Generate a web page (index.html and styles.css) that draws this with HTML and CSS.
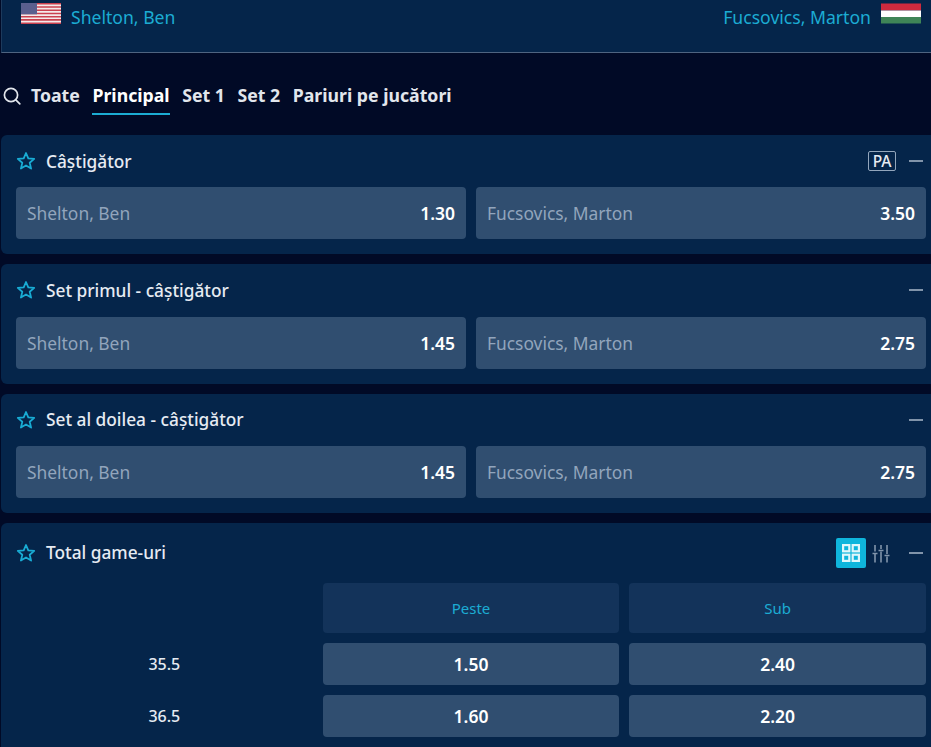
FILE: index.html
```html
<!DOCTYPE html>
<html lang="en">
<head>
  <meta charset="UTF-8" />
  <meta name="viewport" content="width=device-width, initial-scale=1.0" />
  <title>Shelton, Ben - Fucsovics, Marton</title>
  <link rel="stylesheet" href="styles.css">
</head>

<body>
  <svg class="sprite" width="0" height="0">
    <symbol id="star" viewBox="0 0 20 20">
      <path d="M10 2 L12.300 7.400 L18.200 7.900 L13.700 11.800 L15.100 17.600 L10 14.500 L4.900 17.600 L6.300 11.800 L1.800 7.900 L7.700 7.400 Z" fill="none" stroke="currentColor" stroke-width="1.800" stroke-linejoin="round" />
    </symbol>
  </svg>

  <div class="match-head">
    <div class="team">
      <svg class="flag" viewBox="0 0 40 21">
        <rect width="40" height="21" fill="#f4eaea" />
        <path d="M0 0H40V1.600H0ZM0 3.200H40V4.800H0ZM0 6.400H40V8H0ZM0 9.700H40V11.300H0ZM0 12.900H40V14.500H0ZM0 16.100H40V17.700H0ZM0 19.400H40V21H0Z" fill="#c9414f" />
        <rect width="16" height="11.300" fill="#5a5f8e" />
      </svg>
      <span>Shelton, Ben</span>
    </div>
    <div class="team">
      <span>Fucsovics, Marton</span>
      <svg class="flag" viewBox="0 0 40 20">
        <rect width="40" height="7" fill="#cd2a3e" />
        <rect y="7" width="40" height="6.500" fill="#ffffff" />
        <rect y="13.500" width="40" height="6.500" fill="#3f8557" />
      </svg>
    </div>
  </div>

  <div class="tabs">
    <svg class="search" viewBox="0 0 18 18">
      <circle cx="8" cy="8" r="6.600" fill="none" stroke="currentColor" stroke-width="1.700" />
      <path d="M12.800 12.800 L16.800 16.800" stroke="currentColor" stroke-width="1.700" stroke-linecap="round" />
    </svg>
    <a class="tab">Toate</a>
    <a class="tab active">Principal</a>
    <a class="tab">Set 1</a>
    <a class="tab">Set 2</a>
    <a class="tab">Pariuri pe jucători</a>
  </div>

  <div class="market">
    <div class="market-head">
      <svg class="star"><use href="#star" /></svg>
      <span class="title">Câștigător</span>
      <span class="pa">PA</span>
      <span class="minus"></span>
    </div>
    <div class="odds">
      <div class="odd"><span class="name">Shelton, Ben</span><span class="price">1.30</span></div>
      <div class="odd"><span class="name">Fucsovics, Marton</span><span class="price">3.50</span></div>
    </div>
  </div>

  <div class="market">
    <div class="market-head">
      <svg class="star"><use href="#star" /></svg>
      <span class="title">Set primul - câștigător</span>
      <span class="minus"></span>
    </div>
    <div class="odds">
      <div class="odd"><span class="name">Shelton, Ben</span><span class="price">1.45</span></div>
      <div class="odd"><span class="name">Fucsovics, Marton</span><span class="price">2.75</span></div>
    </div>
  </div>

  <div class="market">
    <div class="market-head">
      <svg class="star"><use href="#star" /></svg>
      <span class="title">Set al doilea - câștigător</span>
      <span class="minus"></span>
    </div>
    <div class="odds">
      <div class="odd"><span class="name">Shelton, Ben</span><span class="price">1.45</span></div>
      <div class="odd"><span class="name">Fucsovics, Marton</span><span class="price">2.75</span></div>
    </div>
  </div>

  <div class="market market-total">
    <div class="market-head">
      <svg class="star"><use href="#star" /></svg>
      <span class="title">Total game-uri</span>
      <span class="view-btn">
        <svg viewBox="0 0 18 18" width="18" height="18" fill="none" stroke="#e0f7fb" stroke-width="2.200">
          <rect x="1.100" y="1.100" width="6.200" height="6.200" />
          <rect x="10.700" y="1.100" width="6.200" height="6.200" />
          <rect x="1.100" y="10.700" width="6.200" height="6.200" />
          <rect x="10.700" y="10.700" width="6.200" height="6.200" />
        </svg>
      </span>
      <svg class="sliders" viewBox="0 0 20 20" fill="none" stroke="currentColor" stroke-width="1.600">
        <path d="M4 2V8.500M4 11V19.500M10 2V6M10 8.500V19.500M16 2V11M16 13.500V19.500" />
        <path d="M1.500 10.500H6.500M7.500 7.500H12.500M13.500 12.500H18.500" />
      </svg>
      <span class="minus"></span>
    </div>
    <div class="total-grid">
      <div></div>
      <div class="col-head">Peste</div>
      <div class="col-head">Sub</div>
      <div class="line">35.5</div>
      <div class="cell">1.50</div>
      <div class="cell">2.40</div>
      <div class="line">36.5</div>
      <div class="cell">1.60</div>
      <div class="cell">2.20</div>
    </div>
  </div>
</body>
</html>
```

FILE: styles.css
```css
:root {
  --page: #010a26;
  --card: #05254a;
  --btn: #304e70;
  --head-cell: #13335a;
  --accent: #1cacd3;
}

html {
  height: 100%;
  overflow: hidden;
}

body {
  margin: 0;
  padding-left: 1px;
  font-family: "Noto Sans", sans-serif;
  background: var(--page);
  color: #fff;
}

.sprite {
  position: absolute;
}

.match-head {
  display: flex;
  justify-content: space-between;
  box-sizing: border-box;
  height: 53px;
  padding: 3px 10px 0 19px;
  background: #05254a;
  border-left: 1px solid #1d3a5c;
  border-bottom: 1px solid #4f6480;
}

.team {
  display: flex;
  align-items: flex-start;
  gap: 10px;
  font-size: 17.6px;
  line-height: 28px;
  color: var(--accent);
}

.flag {
  width: 40px;
  height: 21px;
  display: block;
}

.tabs {
  display: flex;
  align-items: flex-start;
  gap: 12.6px;
  box-sizing: border-box;
  height: 82px;
  padding: 31px 0 0 2px;
  color: #e2e6ec;
}

.search {
  width: 18px;
  height: 18px;
  margin: 3px -2.600px 0 0;
}

.tab {
  font-size: 17.7px;
  font-weight: 700;
  line-height: 22px;
  padding-bottom: 7px;
  border-bottom: 2px solid transparent;
}

.tab.active {
  color: #fff;
  border-bottom-color: var(--accent);
}

.market {
  height: 119.3px;
  margin-bottom: 10px;
  background: var(--card);
  border-radius: 6px 0 0 6px;
  box-sizing: border-box;
  padding: 0 5px 0 15px;
}

.market-head {
  display: flex;
  align-items: center;
  height: 52.4px;
  color: #e6ebf2;
}

.star {
  width: 20px;
  height: 20px;
  color: #19acd4;
  margin-right: 10px;
}

.title {
  flex: 1;
  font-size: 17.3px;
  font-weight: 500;
}

.pa {
  border: 1px solid #93a6bc;
  border-radius: 2px;
  font-size: 15.5px;
  font-weight: 500;
  line-height: 18px;
  padding: 0 3.500px;
  margin-right: 13px;
}

.minus {
  width: 14px;
  height: 2px;
  background: #8194aa;
  margin-right: 3px;
}

.odds {
  display: grid;
  grid-template-columns: 1fr 1fr;
  gap: 10px;
}

.odd {
  display: flex;
  align-items: center;
  justify-content: space-between;
  height: 52px;
  padding: 0 11px;
  background: var(--btn);
  border-radius: 4px;
}

.name {
  font-size: 17.4px;
  color: #92a5bc;
}

.price {
  font-size: 17.5px;
  font-weight: 600;
}

.market-total {
  height: auto;
  margin-bottom: 0;
  padding-bottom: 20px;
}

.market-total .market-head {
  height: 60px;
}

.view-btn {
  display: flex;
  align-items: center;
  justify-content: center;
  width: 30px;
  height: 30px;
  background: #0fb5dc;
  border-radius: 2px;
  margin-right: 5px;
}

.sliders {
  width: 20px;
  height: 20px;
  color: #8194aa;
  margin-right: 18px;
}

.total-grid {
  display: grid;
  grid-template-columns: 1fr 1fr 1fr;
  grid-template-rows: 50px 42px 42px;
  gap: 10px;
}

.col-head,
.cell,
.line {
  display: flex;
  align-items: center;
  justify-content: center;
}

.col-head {
  background: var(--head-cell);
  border-radius: 4px;
  font-size: 15px;
  color: var(--accent);
}

.cell {
  background: var(--btn);
  border-radius: 4px;
  font-size: 17.5px;
  font-weight: 600;
}

.line {
  font-size: 16px;
  font-weight: 500;
  color: #e6ebf2;
}
```
